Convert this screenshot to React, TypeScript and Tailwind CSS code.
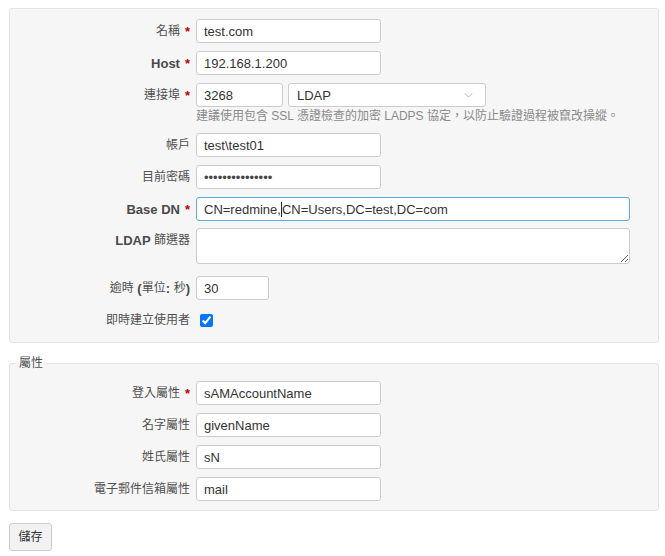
import React from 'react';
import { ChevronDown } from 'lucide-react';

const font = { fontFamily: '"Liberation Sans", "Noto Sans CJK TC", sans-serif' };

// Label part: Latin text is bold 13px, CJK text regular 12px
type Part = { text: string; bold?: boolean };

const Label: React.FC<{ parts: Part[]; required?: boolean }> = ({ parts, required }) => (
  <div className="w-[180px] h-[24px] shrink-0 flex items-center justify-end text-[12px] text-[#505050] leading-none whitespace-nowrap">
    {parts.map((p, i) =>
      p.bold ? (
        <b key={i} className="text-[13px] font-bold text-[#4a4a4a]">{p.text}</b>
      ) : (
        <span key={i}>{p.text}</span>
      )
    )}
    {required && <span className="text-[#bb0000] text-[13px] font-bold ml-[5px]">*</span>}
  </div>
);

const Field: React.FC<{ value?: string; width: string; focused?: boolean; children?: React.ReactNode }> = ({
  value,
  width,
  focused,
  children,
}) => (
  <div
    className={`${width} h-[24px] bg-white rounded-[3px] border ${
      focused ? 'border-[#5aade0]' : 'border-[#cccccc]'
    } flex items-center px-[7px] text-[13px] text-[#333] leading-none whitespace-nowrap`}
  >
    {children ?? value}
  </div>
);

const Row: React.FC<{ label: React.ReactNode; children: React.ReactNode; top?: boolean }> = ({ label, children, top }) => (
  <div className={`flex ${top ? 'items-start' : 'items-center'}`}>
    {label}
    <div className="ml-[6px]">{children}</div>
  </div>
);

export default function App() {
  return (
    <div className="pl-[9px] pr-[6px] pt-[8px] pb-[6px] bg-white" style={font}>
      {/* main settings box */}
      <div className="border border-[#e4e4e4] bg-[#f6f6f6] rounded-[3px] pt-[10px] pb-[10px] flex flex-col gap-[8px]">
        <Row label={<Label parts={[{ text: '名稱' }]} required />}>
          <Field width="w-[185px]" value="test.com" />
        </Row>
        <Row label={<Label parts={[{ text: 'Host', bold: true }]} required />}>
          <Field width="w-[185px]" value="192.168.1.200" />
        </Row>
        <Row top label={<Label parts={[{ text: '連接埠' }]} required />}>
          <div className="flex gap-[5px]">
            <Field width="w-[87px]" value="3268" />
            <div className="w-[198px] h-[24px] bg-white rounded-[3px] border border-[#cccccc] flex items-center justify-between pl-[8px] pr-[10px] text-[13px] text-[#333] leading-none">
              <span>LDAP</span>
              <ChevronDown size={13} strokeWidth={1.6} className="text-[#a8a8a8]" />
            </div>
          </div>
          <div className="mt-[1px] h-[17px] text-[12px] leading-[16px] text-[#8a8a8a] whitespace-nowrap">
            建議使用包含 SSL 憑證檢查的加密 LADPS 協定，以防止驗證過程被竄改操縱。
          </div>
        </Row>
        <Row label={<Label parts={[{ text: '帳戶' }]} />}>
          <Field width="w-[185px]" value="test\test01" />
        </Row>
        <Row label={<Label parts={[{ text: '目前密碼' }]} />}>
          <Field width="w-[185px]">
            <span className="text-[13px] text-[#444]">•••••••••••••••</span>
          </Field>
        </Row>
        <Row label={<Label parts={[{ text: 'Base DN', bold: true }]} required />}>
          <Field width="w-[434px]" focused>
            <span>CN=redmine,</span>
            <span className="inline-block w-px h-[15px] bg-[#222]" />
            <span>CN=Users,DC=test,DC=com</span>
          </Field>
        </Row>
        <div className="-mt-[1px]">
          <Row top label={<Label parts={[{ text: 'LDAP', bold: true }, { text: '\u00a0篩選器' }]} />}>
            <textarea
              readOnly
              className="block w-[434px] h-[36px] bg-white rounded-[3px] border border-[#cccccc] outline-none"
            />
          </Row>
        </div>
        <div className="mt-[4px]">
          <Row
            label={
              <Label
                parts={[
                  { text: '逾時' },
                  { text: '\u00a0(', bold: true },
                  { text: '單位' },
                  { text: ':\u00a0', bold: true },
                  { text: '秒' },
                  { text: ')', bold: true },
                ]}
              />
            }
          >
            <Field width="w-[73px]" value="30" />
          </Row>
        </div>
        <Row label={<Label parts={[{ text: '即時建立使用者' }]} />}>
          <div className="h-[24px] flex items-center">
            <input type="checkbox" defaultChecked className="ml-[4px] w-[13px] h-[13px] accent-[#0075ff]" />
          </div>
        </Row>
      </div>

      {/* attributes fieldset */}
      <fieldset className="mt-[12px] border border-[#e4e4e4] bg-[#f6f6f6] rounded-[3px] pb-[9px] pt-[10px]">
        <legend className="ml-[6px] px-[3px] text-[12px] leading-[16px] text-[#505050]">屬性</legend>
        <div className="flex flex-col gap-[8px]">
          <Row label={<Label parts={[{ text: '登入屬性' }]} required />}>
            <Field width="w-[185px]" value="sAMAccountName" />
          </Row>
          <Row label={<Label parts={[{ text: '名字屬性' }]} />}>
            <Field width="w-[185px]" value="givenName" />
          </Row>
          <Row label={<Label parts={[{ text: '姓氏屬性' }]} />}>
            <Field width="w-[185px]" value="sN" />
          </Row>
          <Row label={<Label parts={[{ text: '電子郵件信箱屬性' }]} />}>
            <Field width="w-[185px]" value="mail" />
          </Row>
        </div>
      </fieldset>

      <button className="mt-[12px] w-[43px] h-[28px] bg-[#f2f2f2] border border-[#cccccc] rounded-[3px] text-[12px] text-[#333] leading-none">
        儲存
      </button>
    </div>
  );
}
